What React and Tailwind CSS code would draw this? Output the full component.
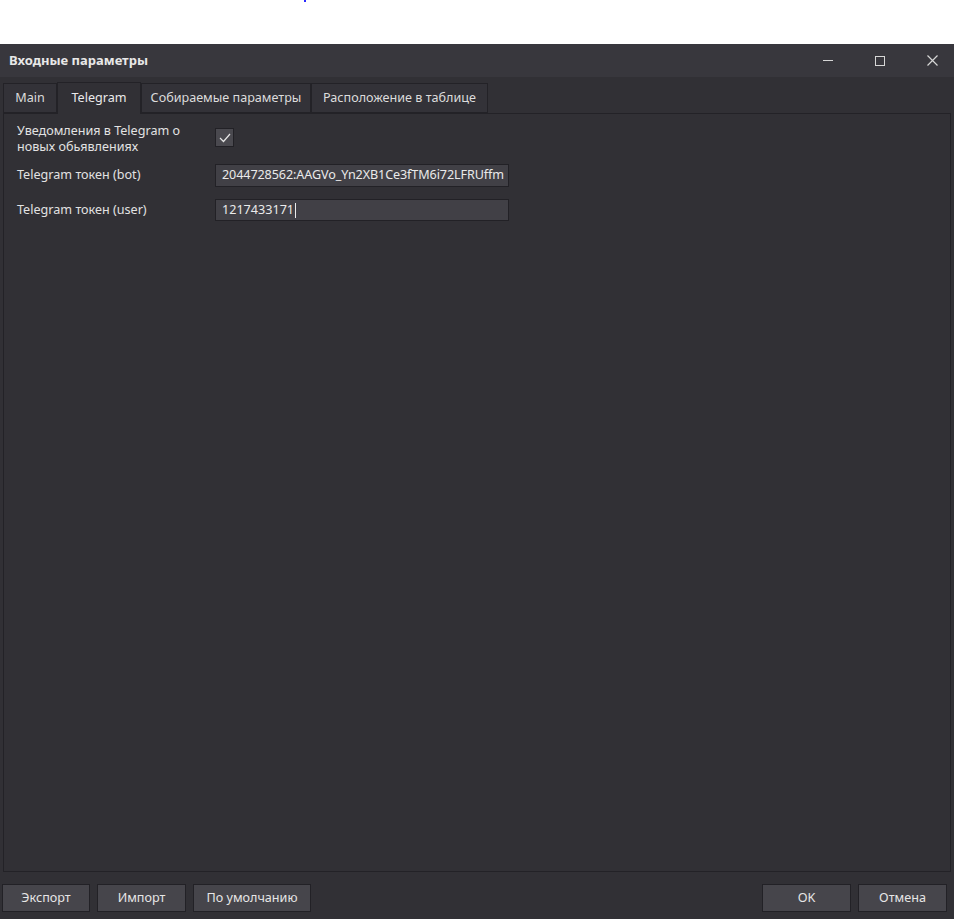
import React from 'react';

const tabs = [
  { label: 'Main', w: 'w-[54px]' },
  { label: 'Telegram', w: 'w-[84px]' },
  { label: 'Собираемые параметры', w: 'w-[170px]' },
  { label: 'Расположение в таблице', w: 'w-[177px]' },
];

const Btn = ({ children, className = '' }) => (
  <button className={`h-[28px] border border-[#222126] bg-[#46454b] text-[12.6px] text-[#e6e6e6] ${className}`}>
    {children}
  </button>
);

const App = () => {
  return (
    <div className="w-[954px] h-[919px] bg-white flex flex-col text-[12.6px] text-[#e2e2e2]" style={{ fontFamily: '"Noto Sans", "Open Sans", sans-serif' }}>
      {/* white strip above the window */}
      <div className="h-[44px] relative">
        <span className="absolute left-[304px] top-0 w-[2px] h-[2px] bg-[#2a2aff]" />
      </div>

      {/* title bar */}
      <div className="h-[33px] bg-[#38373d] flex items-center pl-[9px]">
        <span className="font-bold text-[13px] text-[#e8e8e8] flex-1">Входные параметры</span>
        <div className="flex items-center h-full">
          <div className="w-[52px] h-full flex items-center justify-center">
            <div className="w-[10px] h-[1px] bg-[#d6d6d6]" />
          </div>
          <div className="w-[52px] h-full flex items-center justify-center">
            <div className="w-[10px] h-[10px] border border-[#d6d6d6]" />
          </div>
          <div className="w-[44px] ml-[4px] h-full flex items-center justify-center">
            <svg width="11" height="11" viewBox="0 0 11 11" stroke="#d6d6d6" strokeWidth="1.2">
              <path d="M0.5 0.5 L10.5 10.5 M10.5 0.5 L0.5 10.5" />
            </svg>
          </div>
        </div>
      </div>

      {/* body */}
      <div className="flex-1 bg-[#313035] flex flex-col pl-[3px] pr-[3px]">
        {/* tabs */}
        <div className="flex items-end h-[36px] pt-[5px]">
          {tabs.map((t, i) => (
            <div
              key={t.label}
              className={
                i === 1
                  ? `${t.w} h-[32px] flex items-center justify-center border border-b-0 border-[#232227] bg-[#313035] -mb-[1px] relative z-10 text-[#eaeaea]`
                  : `${t.w} h-[30px] flex items-center justify-center border border-[#232227] bg-[#333238] text-[#dcdcdc]`
              }
            >
              {t.label}
            </div>
          ))}
        </div>

        {/* panel */}
        <div className="h-[759px] border border-[#232227] bg-[#313035] pl-[13px] pt-[9px]">
          <div className="flex items-start">
            <div className="w-[198px] leading-[16px]">
              Уведомления в Telegram о<br />новых обьявлениях
            </div>
            <div className="mt-[5px] w-[19px] h-[19px] border border-[#222126] bg-[#4a494f] flex items-center justify-center">
              <svg width="12" height="10" viewBox="0 0 12 10" fill="none" stroke="#e6e6e6" strokeWidth="1.2">
                <path d="M1 5 L4.5 8.5 L11 1" />
              </svg>
            </div>
          </div>
          <div className="flex items-center mt-[9px]">
            <div className="w-[198px]">Telegram токен (bot)</div>
            <div className="w-[294px] h-[23px] border border-[#222126] bg-[#414046] pl-[6px] flex items-center text-[#eaeaea] overflow-hidden whitespace-nowrap tracking-[-0.1px]">
              2044728562:AAGVo_Yn2XB1Ce3fTM6i72LFRUffm
            </div>
          </div>
          <div className="flex items-center mt-[12px]">
            <div className="w-[198px]">Telegram токен (user)</div>
            <div className="w-[294px] h-[22px] border border-[#222126] bg-[#414046] px-[6px] flex items-center text-[#eaeaea]">
              1217433171<span className="w-[1px] h-[15px] bg-[#eaeaea] ml-[1px]" />
            </div>
          </div>
        </div>

        {/* bottom buttons */}
        <div className="flex items-center mt-[12px] -ml-[1px] pr-[4px]">
          <Btn className="w-[88px]">Экспорт</Btn>
          <Btn className="w-[89px] ml-[7px]">Импорт</Btn>
          <Btn className="w-[118px] ml-[7px]">По умолчанию</Btn>
          <div className="flex-1" />
          <Btn className="w-[89px]">OK</Btn>
          <Btn className="w-[89px] ml-[7px]">Отмена</Btn>
        </div>
      </div>
    </div>
  );
};

export default App;
